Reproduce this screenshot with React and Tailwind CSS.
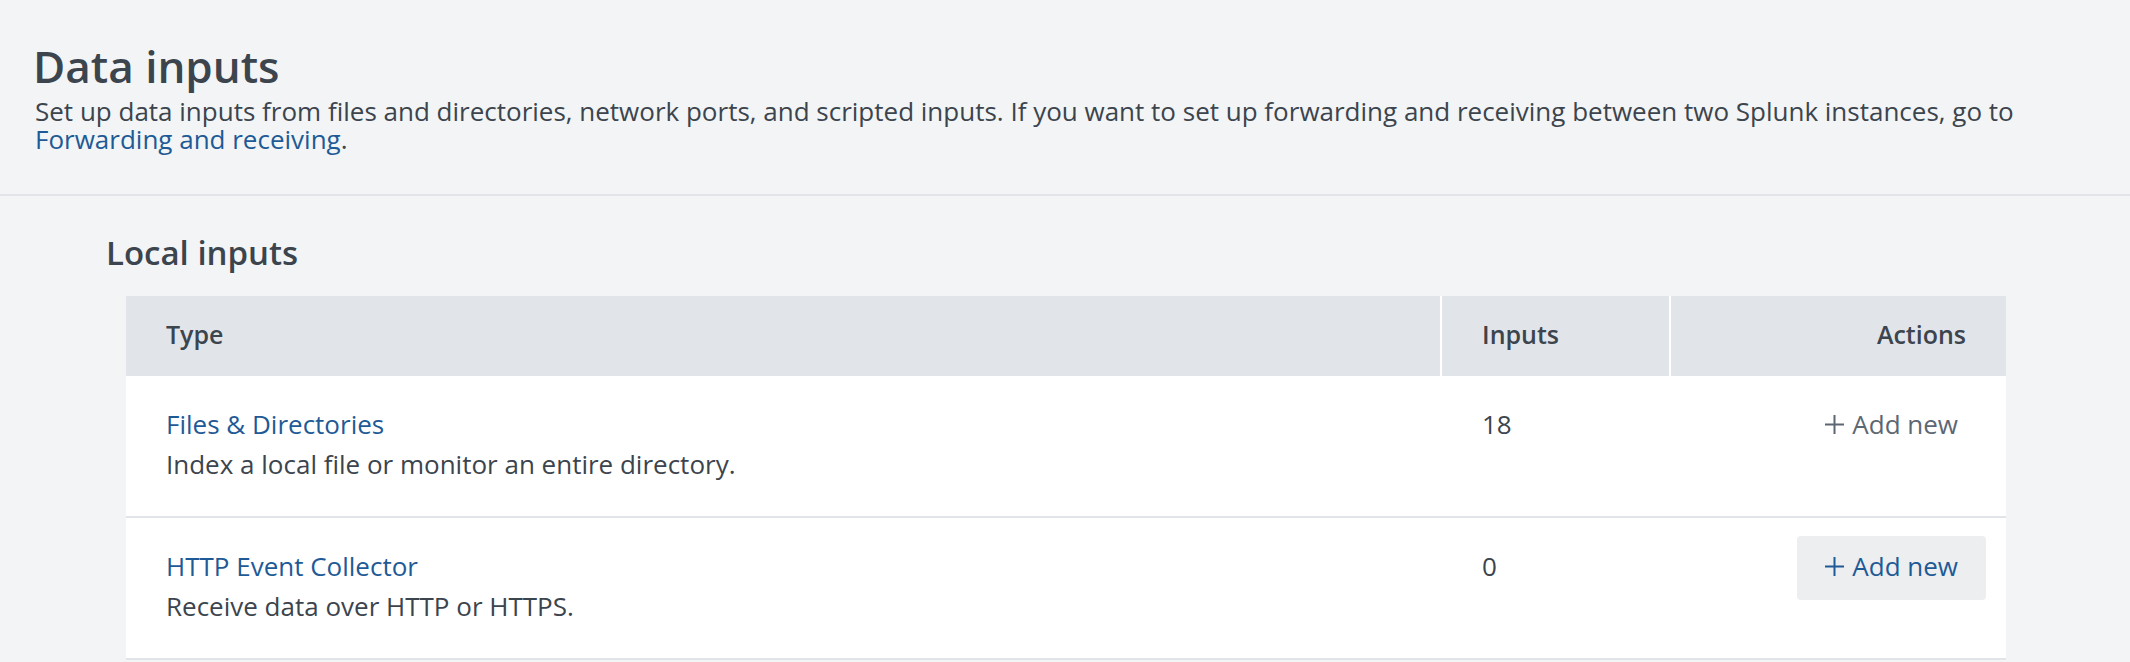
import { Fragment } from "react";

const inputs = [
  {
    name: "Files & Directories",
    description: "Index a local file or monitor an entire directory.",
    count: 18,
    active: false,
  },
  {
    name: "HTTP Event Collector",
    description: "Receive data over HTTP or HTTPS.",
    count: 0,
    active: true,
  },
];

function PlusIcon() {
  return (
    <svg width="19" height="19" viewBox="0 0 19 19" className="shrink-0">
      <path d="M9.5 0V19M0 9.5H19" stroke="currentColor" strokeWidth="2" fill="none" />
    </svg>
  );
}

function App() {
  return (
    <div className="min-h-screen bg-[#f2f4f5] font-['Open_Sans',sans-serif] text-[#3c444d]">
      <header className="border-b-2 border-[#e1e5ea] px-[35px] pt-[40px] pb-[41px]">
        <h1 className="-ml-[2px] text-[44px] font-semibold leading-[52px]">
          Data inputs
        </h1>
        <p className="mt-[5px] text-[26px] leading-[28px]">
          Set up data inputs from files and directories, network ports, and
          scripted inputs. If you want to set up forwarding and receiving
          between two Splunk instances, go to
          <br />
          <a href="#" className="text-[#1e5a96]">
            Forwarding and receiving
          </a>
          .
        </p>
      </header>

      <section className="pl-[106px] pr-[124px] pt-[37px]">
        <h2 className="text-[33px] font-semibold leading-[40px]">Local inputs</h2>

        <div className="ml-[20px] mt-[23px] bg-white">
          <div className="grid grid-cols-[1fr_227px_335px] gap-x-[2px] text-[25px] font-semibold leading-[40px]">
            <div className="bg-[#e1e5ea] pl-[40px] pt-[18px] pb-[22px]">Type</div>
            <div className="bg-[#e1e5ea] pl-[40px] pt-[18px] pb-[22px]">Inputs</div>
            <div className="bg-[#e1e5ea] pr-[40px] pt-[18px] pb-[22px] text-right">
              Actions
            </div>
          </div>

          {inputs.map((input) => (
            <div
              key={input.name}
              className="grid grid-cols-[1fr_227px_335px] gap-x-[2px] border-b-2 border-[#e1e5ea] text-[26px] leading-[40px]"
            >
              <div className="pl-[40px] pt-[28px] pb-[32px]">
                <a href="#" className="block text-[#1e5a96]">
                  {input.name}
                </a>
                <div>{input.description}</div>
              </div>
              <div className="pl-[40px] pt-[28px]">{input.count}</div>
              <div className="flex items-start justify-end pr-[20px] pt-[18px]">
                <button
                  type="button"
                  className={
                    input.active
                      ? "flex items-center gap-[8px] rounded-[4px] bg-[#eceef0] px-[28px] pt-[10px] pb-[14px] leading-[40px] text-[#1e5a96]"
                      : "flex items-center gap-[8px] rounded-[4px] px-[28px] pt-[10px] pb-[14px] leading-[40px] text-[#5c6773]"
                  }
                >
                  <PlusIcon />
                  <span>Add new</span>
                </button>
              </div>
            </div>
          ))}
        </div>
      </section>
    </div>
  );
}

export default App;
